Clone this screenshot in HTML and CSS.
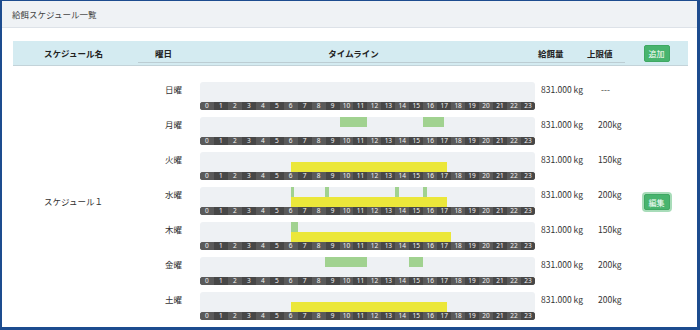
FILE: index.html
```html
<!DOCTYPE html>
<html lang="ja">
<head>
<meta charset="utf-8">
<title>給餌スケジュール一覧</title>
<link rel="stylesheet" href="styles.css">
</head>
<body>
<div class="frame">
  <div class="panel-head">給餌スケジュール一覧</div>
  <div class="panel-body">
    <div class="table">
      <div class="thead">
        <div class="th th-name">スケジュール名</div>
        <div class="th-inner">
          <div class="th th-day">曜日</div>
          <div class="th th-tl">タイムライン</div>
          <div class="th th-amt">給餌量</div>
          <div class="th th-lim">上限値</div>
        </div>
        <div class="th th-act"><button class="btn">追加</button></div>
      </div>
      <div class="tbody">
        <div class="td-name">スケジュール１</div>
        <div class="days">
          <div class="row">
            <div class="day">日曜</div>
            <div class="tl"><div class="track"></div><div class="hours"></div></div>
            <div class="amt">831.000 kg</div>
            <div class="lim none">---</div>
          </div>
          <div class="row">
            <div class="day">月曜</div>
            <div class="tl"><div class="track">
              <span class="bar g" style="left:140px;width:27px"></span>
              <span class="bar g" style="left:223px;width:21px"></span>
            </div><div class="hours"></div></div>
            <div class="amt">831.000 kg</div>
            <div class="lim">200kg</div>
          </div>
          <div class="row">
            <div class="day">火曜</div>
            <div class="tl"><div class="track">
              <span class="bar y" style="left:91px;width:156px"></span>
            </div><div class="hours"></div></div>
            <div class="amt">831.000 kg</div>
            <div class="lim">150kg</div>
          </div>
          <div class="row">
            <div class="day">水曜</div>
            <div class="tl"><div class="track">
              <span class="bar g" style="left:91px;width:3px"></span>
              <span class="bar g" style="left:125px;width:4px"></span>
              <span class="bar g" style="left:195px;width:4px"></span>
              <span class="bar g" style="left:223px;width:4px"></span>
              <span class="bar y" style="left:91px;width:156px"></span>
            </div><div class="hours"></div></div>
            <div class="amt">831.000 kg</div>
            <div class="lim">200kg</div>
          </div>
          <div class="row">
            <div class="day">木曜</div>
            <div class="tl"><div class="track">
              <span class="bar g" style="left:91px;width:7px"></span>
              <span class="bar y" style="left:91px;width:160px"></span>
            </div><div class="hours"></div></div>
            <div class="amt">831.000 kg</div>
            <div class="lim">150kg</div>
          </div>
          <div class="row">
            <div class="day">金曜</div>
            <div class="tl"><div class="track">
              <span class="bar g" style="left:125px;width:42px"></span>
              <span class="bar g" style="left:209px;width:14px"></span>
            </div><div class="hours"></div></div>
            <div class="amt">831.000 kg</div>
            <div class="lim">200kg</div>
          </div>
          <div class="row">
            <div class="day">土曜</div>
            <div class="tl"><div class="track">
              <span class="bar y" style="left:91px;width:156px"></span>
            </div><div class="hours"></div></div>
            <div class="amt">831.000 kg</div>
            <div class="lim">200kg</div>
          </div>
        </div>
        <div class="td-act"><button class="btn btn-focus">編集</button></div>
      </div>
    </div>
  </div>
</div>
<script src="script.js"></script>
</body>
</html>
```
FILE: script.js
```js
document.querySelectorAll('.hours').forEach(function (h) {
  for (var i = 0; i < 24; i++) {
    var s = document.createElement('span');
    s.textContent = i;
    h.appendChild(s);
  }
});
```
FILE: styles.css
```css
html, body {
  margin: 0;
  padding: 0;
  background: #fff;
}
body {
  font-family: "Noto Sans CJK JP", "Noto Sans", sans-serif;
  font-size: 8.5px;
  color: #333;
}
.frame {
  width: 700px;
  height: 330px;
  box-sizing: border-box;
  border-style: solid;
  border-color: #1d4c8f;
  border-width: 1px 3px 3px 2px;
  overflow: hidden;
  background: #fff;
}
.panel-head {
  height: 26px;
  line-height: 26px;
  padding-left: 10px;
  background: #eff2f5;
  border-bottom: 1px solid #dde2e8;
  color: #444;
}
.panel-body {
  padding: 13px 9px 0 11px;
}
.table {
  width: 675px;
}
.thead {
  display: grid;
  grid-template-columns: 125px 487px 63px;
  height: 24px;
  background: #d4ebf1;
  border-bottom: 1px solid #c3d3d9;
  font-weight: bold;
  color: #222;
}
.th {
  line-height: 24px;
}
.th-name {
  text-align: center;
  padding-right: 4px;
}
.th-inner {
  display: grid;
  grid-template-columns: 62px 335px 50px 40px;
  height: 21px;
  border-bottom: 1px solid #bccdd3;
}
.th-inner .th {
  line-height: 24px;
}
.th-day { padding-left: 17px; }
.th-tl { text-align: center; padding-right: 28px; }
.th-amt { padding-left: 3px; }
.th-lim { padding-left: 2px; }
.th-act {
  display: flex;
  align-items: center;
  justify-content: center;
}
.btn {
  font-family: inherit;
  font-size: 8px;
  color: #fff;
  background: #48b46e;
  border: 1px solid #3fa863;
  border-radius: 2px;
  height: 17px;
  width: 26px;
  padding: 0;
  line-height: 15px;
  font-weight: normal;
}
.btn-focus {
  box-shadow: 0 0 0 2px #a8dcb9;
  width: 26px;
  height: 16px;
}
.tbody {
  display: grid;
  grid-template-columns: 125px 487px 63px;
  padding-top: 16px;
}
.td-name {
  align-self: center;
  text-align: center;
  padding-right: 4px;
}
.td-act {
  align-self: center;
  display: flex;
  justify-content: center;
  padding-top: 2px;
}
.days {
  display: flex;
  flex-direction: column;
  gap: 7px;
}
.row {
  display: grid;
  grid-template-columns: 62px 335px 50px 40px;
  height: 28px;
}
.day {
  text-align: right;
  padding-right: 18px;
  line-height: 14px;
}
.amt {
  padding-left: 6px;
  line-height: 14px;
}
.lim {
  padding-left: 13px;
  line-height: 14px;
}
.lim.none { padding-left: 16px; }
.tl {
  display: flex;
  flex-direction: column;
}
.track {
  position: relative;
  height: 20px;
  background: #eef1f4;
  border-radius: 3px 3px 0 0;
}
.bar {
  position: absolute;
  height: 10px;
}
.bar.g { top: 0; background: #a1d290; }
.bar.y { top: 10px; background: #ebe73a; }
.hours {
  display: flex;
  height: 8px;
  border-radius: 3px;
  overflow: hidden;
  background: #4a4a4a;
}
.hours span {
  flex: 1;
  text-align: center;
  font-family: "Noto Sans", sans-serif;
  font-size: 6.5px;
  line-height: 8px;
  color: #f2f2f2;
  background: #5a5a5a;
}
.hours span:nth-child(even) {
  background: #474747;
}
```
